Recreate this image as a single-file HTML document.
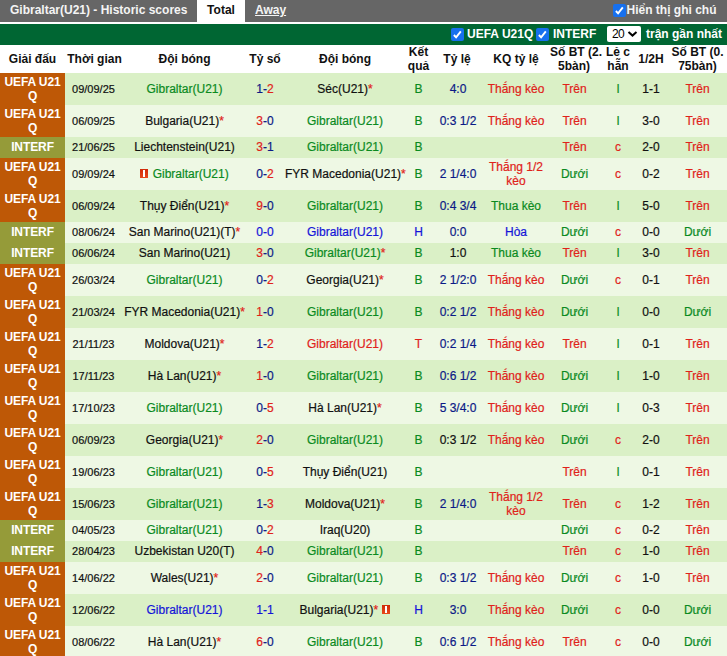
<!DOCTYPE html>
<html><head><meta charset="utf-8"><title>Gibraltar(U21) - Historic scores</title>
<style>
html,body{margin:0;padding:0;background:#fff;}
body{width:727px;height:656px;overflow:hidden;position:relative;font-family:"Liberation Sans",Arial,sans-serif;font-size:12px;color:#111;}
#top{position:absolute;left:0;top:0;width:727px;height:22px;background:#666;color:#f4f4f4;font-weight:bold;font-size:12px;line-height:20px;}
#top span{position:absolute;top:0;white-space:nowrap;}
#top .t{left:10px;}
#top .tab{left:197px;width:48px;height:22px;background:#fff;color:#111;text-align:center;}
#top .aw{left:255px;text-decoration:underline;}
#top .chk{left:626.5px;}
#bar{position:absolute;left:0;top:24px;width:727px;height:21px;background:#006633;color:#fff;font-weight:bold;font-size:12px;line-height:21px;}
#bar span{position:absolute;top:0;white-space:nowrap;}
.cb{position:absolute;width:13px;height:13px;background:#1670ee;border-radius:2px;}
.cb svg{position:absolute;left:0;top:0;width:13px;height:13px;}
#sel{position:absolute;left:607px;top:26px;width:34px;height:16px;background:#fff;border-radius:2px;color:#000;font-size:12px;line-height:16px;}
#sel b{position:absolute;left:5px;top:0;font-weight:normal;letter-spacing:-0.6px;}
#sel svg{position:absolute;left:20px;top:3px;}
table{position:absolute;left:0;top:45px;border-collapse:collapse;width:727px;table-layout:fixed;}
td,th{padding:0;white-space:nowrap;text-align:center;vertical-align:middle;font-size:12px;line-height:14px;}
th{height:28px;font-weight:bold;background:#fff;color:#111;}
tr.a td{background:#daf0c6;}
tr.b2 td{background:#eef8e4;}
td.lu{background:#be5806 !important;color:#fff;font-weight:bold;height:32px;line-height:14px;}
td.li{background:#959b39 !important;color:#fff;font-weight:bold;height:20px;}
tr.i td{padding-bottom:1px;}
td.d{font-size:11px;padding-right:2px;}
td{-webkit-text-stroke:0.2px;}
td.lu,td.li{-webkit-text-stroke:0;letter-spacing:-0.1px;}
td.o{padding-left:2px;}
th:nth-child(12){padding-left:2px;}
th:nth-child(9){padding-right:2px;}
td:nth-child(9){padding-right:1px;}
.g{color:#0a8a1e;}
.r{color:#e0221a;}
.b{color:#1414d8;}
.n{color:#0c1a86;}
.k{color:#111;}
.card{display:inline-block;position:relative;width:8px;height:9px;background:linear-gradient(#d02a08,#e8481a);vertical-align:0;margin-right:1px;}
.card i{position:absolute;left:3px;top:1px;width:2px;height:7px;background:#fff;}
</style></head><body>
<div id="top"><span class="t">Gibraltar(U21) - Historic scores</span><span class="tab">Total</span><span class="aw">Away</span><i class="cb" style="left:613px;top:4px"><svg viewBox="0 0 13 13"><path d="M2.9 7l2.2 2.4 4.7-6.1" fill="none" stroke="#fff" stroke-width="1.9"/></svg></i><span class="chk">Hiển thị ghi chú</span></div>
<div id="bar"><i class="cb" style="left:451px;top:4px"><svg viewBox="0 0 13 13"><path d="M2.9 7l2.2 2.4 4.7-6.1" fill="none" stroke="#fff" stroke-width="1.9"/></svg></i><span style="left:467px">UEFA U21Q</span><i class="cb" style="left:536px;top:4px"><svg viewBox="0 0 13 13"><path d="M2.9 7l2.2 2.4 4.7-6.1" fill="none" stroke="#fff" stroke-width="1.9"/></svg></i><span style="left:553px">INTERF</span><span style="left:646px">trận gần nhất</span></div>
<div id="sel"><b>20</b><svg width="11" height="9" viewBox="0 0 11 9"><path d="M1.5 3l4 3.6 4-3.6" fill="none" stroke="#000" stroke-width="2"/></svg></div>
<table>
<colgroup><col style="width:65px"><col style="width:59px"><col style="width:121px"><col style="width:40px"><col style="width:120px"><col style="width:27px"><col style="width:50px"><col style="width:68px"><col style="width:50px"><col style="width:36px"><col style="width:30px"><col style="width:61px"></colgroup>
<tr><th>Giải đấu</th><th>Thời gian</th><th>Đội bóng</th><th>Tỷ số</th><th>Đội bóng</th><th>Kết<br>quả</th><th>Tỷ lệ</th><th>KQ tỷ lệ</th><th>Số BT (2.<br>5bàn)</th><th>Lẻ c<br>hẵn</th><th>1/2H</th><th>Số BT (0.<br>75bàn)</th></tr>
<tr class="a"><td class="lu">UEFA U21<br>Q</td><td class="d">09/09/25</td><td><span class="g">Gibraltar(U21)</span></td><td><span class="n">1-<span class="r">2</span></span></td><td>Séc(U21)<span class="r">*</span></td><td class="g">B</td><td class="n o">4:0</td><td class="r">Thắng kèo</td><td class="r">Trên</td><td class="g">l</td><td>1-1</td><td class="r o">Trên</td></tr>
<tr class="b2"><td class="lu">UEFA U21<br>Q</td><td class="d">06/09/25</td><td>Bulgaria(U21)<span class="r">*</span></td><td><span class="n"><span class="r">3</span>-0</span></td><td><span class="g">Gibraltar(U21)</span></td><td class="g">B</td><td class="n o">0:3 1/2</td><td class="r">Thắng kèo</td><td class="r">Trên</td><td class="g">l</td><td>3-0</td><td class="r o">Trên</td></tr>
<tr class="a i"><td class="li">INTERF</td><td class="d">21/06/25</td><td>Liechtenstein(U21)</td><td><span class="n"><span class="r">3</span>-1</span></td><td><span class="g">Gibraltar(U21)</span></td><td class="g">B</td><td class="n o"></td><td class=""></td><td class="r">Trên</td><td class="r">c</td><td>2-0</td><td class="r o">Trên</td></tr>
<tr class="b2"><td class="lu">UEFA U21<br>Q</td><td class="d">09/09/24</td><td><i class="card"><i></i></i> <span class="g">Gibraltar(U21)</span></td><td><span class="n">0-<span class="r">2</span></span></td><td>FYR Macedonia(U21)<span class="r">*</span></td><td class="g">B</td><td class="n o">2 1/4:0</td><td class="r">Thắng 1/2<br>kèo</td><td class="g">Dưới</td><td class="r">c</td><td>0-2</td><td class="r o">Trên</td></tr>
<tr class="a"><td class="lu">UEFA U21<br>Q</td><td class="d">06/09/24</td><td>Thụy Điển(U21)<span class="r">*</span></td><td><span class="n"><span class="r">9</span>-0</span></td><td><span class="g">Gibraltar(U21)</span></td><td class="g">B</td><td class="n o">0:4 3/4</td><td class="g">Thua kèo</td><td class="r">Trên</td><td class="g">l</td><td>5-0</td><td class="r o">Trên</td></tr>
<tr class="b2 i"><td class="li">INTERF</td><td class="d">08/06/24</td><td>San Marino(U21)(T)<span class="r">*</span></td><td><span class="b">0-0</span></td><td><span class="b">Gibraltar(U21)</span></td><td class="b">H</td><td class="n o">0:0</td><td class="b">Hòa</td><td class="g">Dưới</td><td class="r">c</td><td>0-0</td><td class="g o">Dưới</td></tr>
<tr class="a i"><td class="li">INTERF</td><td class="d">06/06/24</td><td>San Marino(U21)</td><td><span class="n"><span class="r">3</span>-0</span></td><td><span class="g">Gibraltar(U21)</span><span class="r">*</span></td><td class="g">B</td><td class="k o">1:0</td><td class="g">Thua kèo</td><td class="r">Trên</td><td class="g">l</td><td>3-0</td><td class="r o">Trên</td></tr>
<tr class="b2"><td class="lu">UEFA U21<br>Q</td><td class="d">26/03/24</td><td><span class="g">Gibraltar(U21)</span></td><td><span class="n">0-<span class="r">2</span></span></td><td>Georgia(U21)<span class="r">*</span></td><td class="g">B</td><td class="n o">2 1/2:0</td><td class="r">Thắng kèo</td><td class="g">Dưới</td><td class="r">c</td><td>0-1</td><td class="r o">Trên</td></tr>
<tr class="a"><td class="lu">UEFA U21<br>Q</td><td class="d">21/03/24</td><td>FYR Macedonia(U21)<span class="r">*</span></td><td><span class="n"><span class="r">1</span>-0</span></td><td><span class="g">Gibraltar(U21)</span></td><td class="g">B</td><td class="n o">0:2 1/2</td><td class="r">Thắng kèo</td><td class="g">Dưới</td><td class="g">l</td><td>0-0</td><td class="g o">Dưới</td></tr>
<tr class="b2"><td class="lu">UEFA U21<br>Q</td><td class="d">21/11/23</td><td>Moldova(U21)<span class="r">*</span></td><td><span class="n">1-<span class="r">2</span></span></td><td><span class="r">Gibraltar(U21)</span></td><td class="r">T</td><td class="n o">0:2 1/4</td><td class="r">Thắng kèo</td><td class="r">Trên</td><td class="g">l</td><td>0-1</td><td class="r o">Trên</td></tr>
<tr class="a"><td class="lu">UEFA U21<br>Q</td><td class="d">17/11/23</td><td>Hà Lan(U21)<span class="r">*</span></td><td><span class="n"><span class="r">1</span>-0</span></td><td><span class="g">Gibraltar(U21)</span></td><td class="g">B</td><td class="n o">0:6 1/2</td><td class="r">Thắng kèo</td><td class="g">Dưới</td><td class="g">l</td><td>1-0</td><td class="r o">Trên</td></tr>
<tr class="b2"><td class="lu">UEFA U21<br>Q</td><td class="d">17/10/23</td><td><span class="g">Gibraltar(U21)</span></td><td><span class="n">0-<span class="r">5</span></span></td><td>Hà Lan(U21)<span class="r">*</span></td><td class="g">B</td><td class="n o">5 3/4:0</td><td class="r">Thắng kèo</td><td class="g">Dưới</td><td class="g">l</td><td>0-3</td><td class="r o">Trên</td></tr>
<tr class="a"><td class="lu">UEFA U21<br>Q</td><td class="d">06/09/23</td><td>Georgia(U21)<span class="r">*</span></td><td><span class="n"><span class="r">2</span>-0</span></td><td><span class="g">Gibraltar(U21)</span></td><td class="g">B</td><td class="k o">0:3 1/2</td><td class="r">Thắng kèo</td><td class="g">Dưới</td><td class="r">c</td><td>2-0</td><td class="r o">Trên</td></tr>
<tr class="b2"><td class="lu">UEFA U21<br>Q</td><td class="d">19/06/23</td><td><span class="g">Gibraltar(U21)</span></td><td><span class="n">0-<span class="r">5</span></span></td><td>Thụy Điển(U21)</td><td class="g">B</td><td class="n o"></td><td class=""></td><td class="r">Trên</td><td class="g">l</td><td>0-1</td><td class="r o">Trên</td></tr>
<tr class="a"><td class="lu">UEFA U21<br>Q</td><td class="d">15/06/23</td><td><span class="g">Gibraltar(U21)</span></td><td><span class="n">1-<span class="r">3</span></span></td><td>Moldova(U21)<span class="r">*</span></td><td class="g">B</td><td class="n o">2 1/4:0</td><td class="r">Thắng 1/2<br>kèo</td><td class="r">Trên</td><td class="r">c</td><td>1-2</td><td class="r o">Trên</td></tr>
<tr class="b2 i"><td class="li">INTERF</td><td class="d">04/05/23</td><td><span class="g">Gibraltar(U21)</span></td><td><span class="n">0-<span class="r">2</span></span></td><td>Iraq(U20)</td><td class="g">B</td><td class="n o"></td><td class=""></td><td class="g">Dưới</td><td class="r">c</td><td>0-2</td><td class="r o">Trên</td></tr>
<tr class="a i"><td class="li">INTERF</td><td class="d">28/04/23</td><td>Uzbekistan U20(T)</td><td><span class="n"><span class="r">4</span>-0</span></td><td><span class="g">Gibraltar(U21)</span></td><td class="g">B</td><td class="n o"></td><td class=""></td><td class="r">Trên</td><td class="r">c</td><td>1-0</td><td class="r o">Trên</td></tr>
<tr class="b2"><td class="lu">UEFA U21<br>Q</td><td class="d">14/06/22</td><td>Wales(U21)<span class="r">*</span></td><td><span class="n"><span class="r">2</span>-0</span></td><td><span class="g">Gibraltar(U21)</span></td><td class="g">B</td><td class="n o">0:3 1/2</td><td class="r">Thắng kèo</td><td class="g">Dưới</td><td class="r">c</td><td>1-0</td><td class="r o">Trên</td></tr>
<tr class="a"><td class="lu">UEFA U21<br>Q</td><td class="d">12/06/22</td><td><span class="b">Gibraltar(U21)</span></td><td><span class="b">1-1</span></td><td>Bulgaria(U21)<span class="r">*</span> <i class="card"><i></i></i></td><td class="b">H</td><td class="n o">3:0</td><td class="r">Thắng kèo</td><td class="g">Dưới</td><td class="r">c</td><td>0-0</td><td class="g o">Dưới</td></tr>
<tr class="b2"><td class="lu">UEFA U21<br>Q</td><td class="d">08/06/22</td><td>Hà Lan(U21)<span class="r">*</span></td><td><span class="n"><span class="r">6</span>-0</span></td><td><span class="g">Gibraltar(U21)</span></td><td class="g">B</td><td class="n o">0:6 1/2</td><td class="r">Thắng kèo</td><td class="r">Trên</td><td class="r">c</td><td>0-0</td><td class="g o">Dưới</td></tr>
</table>
</body></html>
